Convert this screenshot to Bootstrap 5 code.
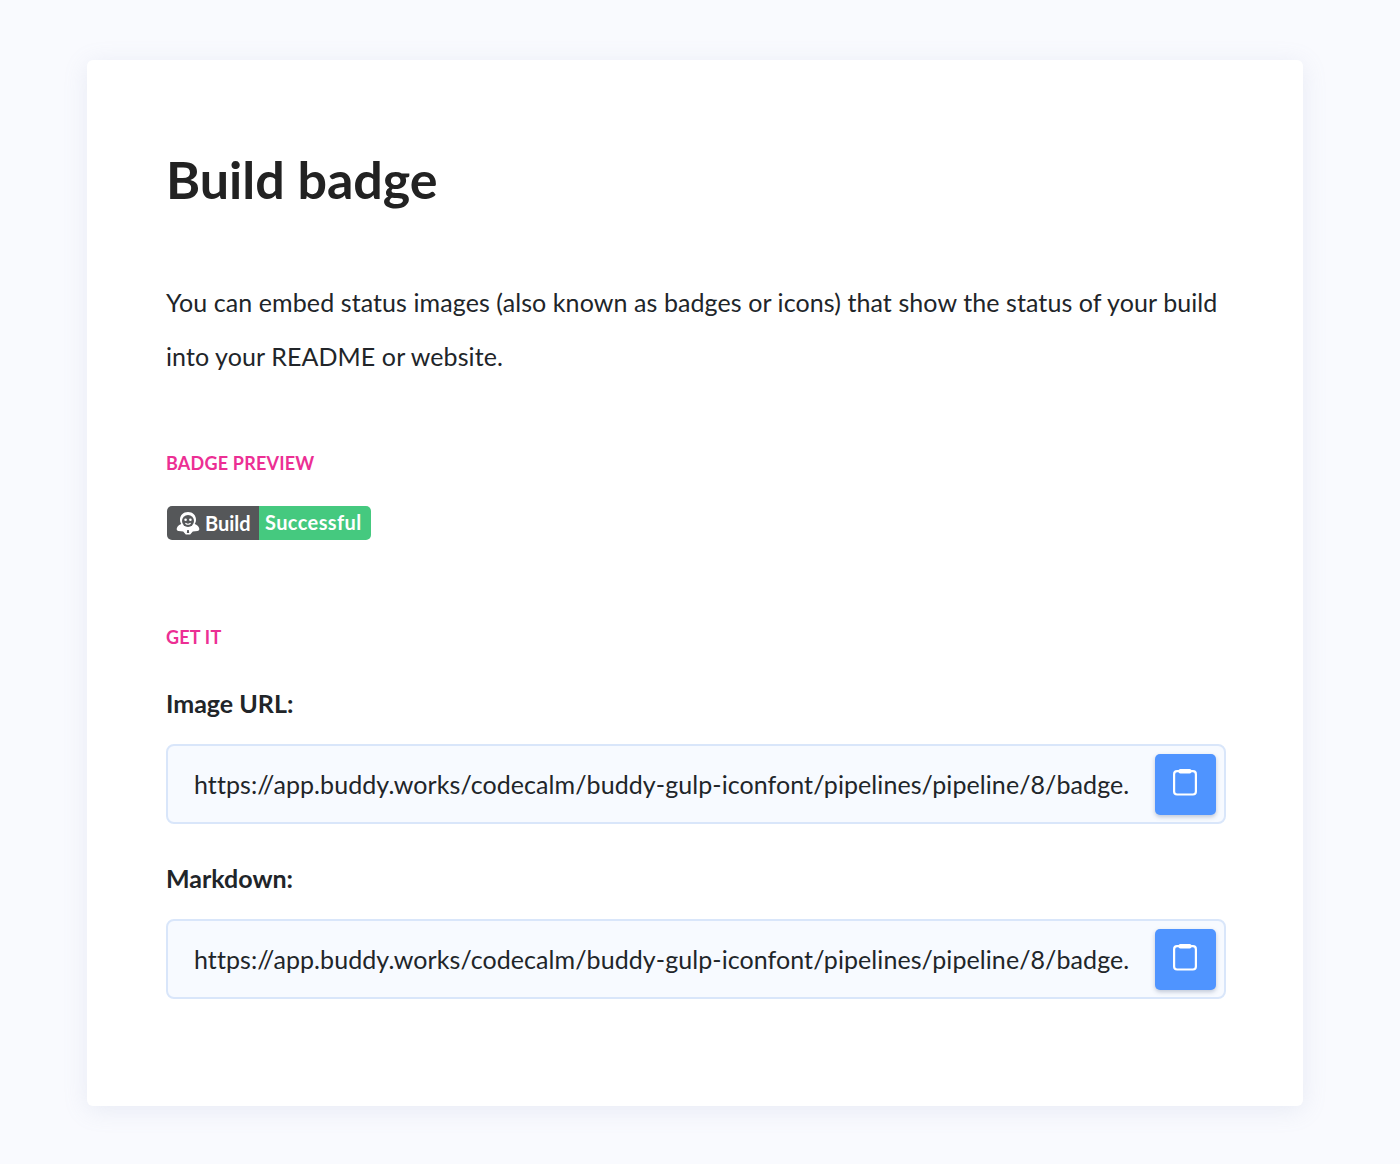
<!DOCTYPE html>
<html lang="en">

<head>
    <meta charset="UTF-8" />
    <meta name="viewport" content="width=device-width, initial-scale=1.0" />
    <title>Build badge</title>
    <link rel="stylesheet" href="https://cdn.jsdelivr.net/npm/bootstrap@5.3.3/dist/css/bootstrap.min.css" />
    <style>
        body {
            background: #f9fafe;
            font-family: Lato, "Liberation Sans", sans-serif;
            color: #212529;
        }

        .page-wrap {
            padding: 60px 97px 58px 87px;
        }

        .sheet {
            background: #fff;
            border-radius: 6px;
            box-shadow: 0 4px 24px rgba(140, 155, 190, .16);
            padding: 84px 77px 107px 79px;
            height: 1046px;
        }

        .sheet h1 {
            font-size: 52px;
            font-weight: 700;
            line-height: 70px;
            margin-bottom: 61px;
            color: #222;
        }

        .intro {
            font-size: 25px;
            line-height: 54px;
            letter-spacing: .09px;
            margin-bottom: 67px;
        }

        .eyebrow {
            color: #ec2f94;
            font-size: 18px;
            font-weight: 700;
            line-height: 26px;
            letter-spacing: .2px;
            margin-bottom: 30px;
        }

        .get-it {
            margin-bottom: 36px;
        }

        .build-badge {
            display: inline-flex;
            height: 34px;
            border-radius: 5px;
            overflow: hidden;
            font-size: 20px;
            line-height: 33px;
            font-weight: 700;
            color: #fff;
            margin-bottom: 84px;
            margin-left: 1px;
        }

        .badge-left {
            width: 92px;
            background: #555759;
            gap: 4px;
            padding-left: 8px;
        }

        .badge-right {
            width: 112px;
            background: #45c97f;
            padding-left: 6px;
            letter-spacing: .4px;
        }

        .field-label {
            font-size: 25px;
            font-weight: 700;
            line-height: 36px;
            margin-top: -1px;
            margin-bottom: 23px;
        }

        .copy-field {
            height: 80px;
            border: 2px solid #d9e6fa;
            border-radius: 8px;
            background: #f7faff;
            padding: 0 8px 0 26px;
            margin-bottom: 37px;
            font-size: 25px;
            letter-spacing: .075px;
            white-space: nowrap;
        }

        .field-url {
            padding-top: 2px;
        }

        .copy-btn {
            width: 61px;
            height: 61px;
            background: #4f94ff;
            border-radius: 5px;
            box-shadow: 0 2px 4px rgba(60, 80, 120, .3);
            border: 0;
            padding: 0;
        }

        .copy-btn svg {
            margin: -3px 0 0 -2px;
        }
    </style>
</head>

<body>
    <div class="page-wrap">
        <div class="sheet">
            <h1>Build badge</h1>
            <p class="intro">You can embed status images (also known as badges or icons) that show the status of your build into your README or website.</p>

            <div class="eyebrow">BADGE PREVIEW</div>
            <div class="build-badge">
                <div class="badge-left d-flex align-items-center">
                    <svg width="26" height="26" viewBox="0 0 26 26" aria-hidden="true">
                        <path fill="#fff" d="M13 2C8.200 2 5 5.300 5 9.700c0 1.700.5 3.100 1.300 4.300C4 14.600 2.200 16.300 1.700 18.700c-.2 1.200.6 2.200 1.800 2.300l4.700.4 2.600 3h4.400l2.600-3 4.700-.4c1.200-.1 2-1.100 1.800-2.300-.5-2.400-2.300-4.100-4.600-4.700.8-1.200 1.300-2.600 1.300-4.300C21 5.300 17.800 2 13 2z" />
                        <circle cx="13" cy="11" r="6" fill="#555759" />
                        <circle cx="10.600" cy="9.800" r="1.300" fill="#fff" />
                        <circle cx="15.400" cy="9.800" r="1.300" fill="#fff" />
                        <path fill="none" stroke="#fff" stroke-width="1.200" stroke-linecap="round" d="M10.800 13.400c1.300 1 3.100 1 4.400 0" />
                        <path fill="#555759" d="M12.200 20h1.600l.4 3h-2.400z" />
                    </svg>
                    <span>Build</span>
                </div>
                <div class="badge-right">Successful</div>
            </div>

            <div class="eyebrow get-it">GET IT</div>

            <div class="field-label">Image URL:</div>
            <div class="copy-field d-flex align-items-center justify-content-between">
                <span class="field-url">https://app.buddy.works/codecalm/buddy-gulp-iconfont/pipelines/pipeline/8/badge.</span>
                <button type="button" class="copy-btn d-flex align-items-center justify-content-center flex-shrink-0" aria-label="Copy">
                    <svg width="24" height="27" viewBox="0 0 24 27" aria-hidden="true">
                        <rect x="1.100" y="2.200" width="21.800" height="23.300" rx="3" fill="none" stroke="#fff" stroke-width="2.200" />
                        <rect x="5.500" y="0" width="13" height="4.500" rx="1.800" fill="#fff" />
                    </svg>
                </button>
            </div>

            <div class="field-label">Markdown:</div>
            <div class="copy-field d-flex align-items-center justify-content-between">
                <span class="field-url">https://app.buddy.works/codecalm/buddy-gulp-iconfont/pipelines/pipeline/8/badge.</span>
                <button type="button" class="copy-btn d-flex align-items-center justify-content-center flex-shrink-0" aria-label="Copy">
                    <svg width="24" height="27" viewBox="0 0 24 27" aria-hidden="true">
                        <rect x="1.100" y="2.200" width="21.800" height="23.300" rx="3" fill="none" stroke="#fff" stroke-width="2.200" />
                        <rect x="5.500" y="0" width="13" height="4.500" rx="1.800" fill="#fff" />
                    </svg>
                </button>
            </div>
        </div>
    </div>

    <script src="https://cdn.jsdelivr.net/npm/bootstrap@5.3.3/dist/js/bootstrap.bundle.min.js"></script>
</body>

</html>
